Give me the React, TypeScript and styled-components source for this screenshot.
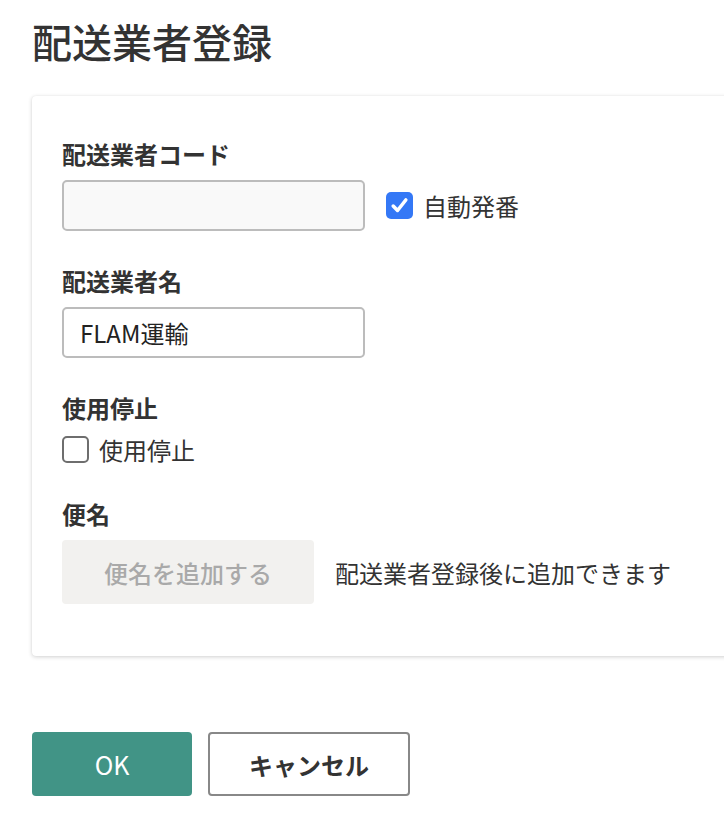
import React, { useState } from "react";
import styled, { createGlobalStyle } from "styled-components";

const GlobalStyle = createGlobalStyle`
  html, body {
    margin: 0;
    padding: 0;
    background: #ffffff;
    overflow-x: hidden;
  }
  body {
    font-family: "Noto Sans CJK JP", "Noto Sans", sans-serif;
    color: #333333;
  }
  * {
    box-sizing: border-box;
  }
`;

const CheckIcon = () => (
  <svg width="21" height="21" viewBox="0 0 16 16" fill="none">
    <path
      d="M3.2 8.4 L6.5 11.8 L12.8 3.8"
      stroke="#ffffff"
      strokeWidth="2.7"
      strokeLinecap="round"
      strokeLinejoin="round"
    />
  </svg>
);

const App: React.FC = () => {
  const [autoNumber, setAutoNumber] = useState(true);
  const [stopped, setStopped] = useState(false);
  const [name, setName] = useState("FLAM運輸");

  return (
    <>
      <GlobalStyle />
      <Page>
        <Title>配送業者登録</Title>

        <Card>
          {/* 配送業者コード */}
          <FieldGroup>
            <Label>配送業者コード</Label>
            <Row>
              <TextInput disabled={autoNumber} value="" readOnly />
              <CheckLabel onClick={() => setAutoNumber(!autoNumber)}>
                <CheckBox checked={autoNumber}>
                  {autoNumber && <CheckIcon />}
                </CheckBox>
                自動発番
              </CheckLabel>
            </Row>
          </FieldGroup>

          {/* 配送業者名 */}
          <FieldGroup>
            <Label>配送業者名</Label>
            <TextInput value={name} onChange={(e) => setName(e.target.value)} />
          </FieldGroup>

          {/* 使用停止 */}
          <FieldGroup>
            <Label>使用停止</Label>
            <CheckLabel onClick={() => setStopped(!stopped)}>
              <CheckBox checked={stopped}>
                {stopped && <CheckIcon />}
              </CheckBox>
              使用停止
            </CheckLabel>
          </FieldGroup>

          {/* 便名 */}
          <FieldGroup>
            <Label>便名</Label>
            <Row>
              <SubButton disabled>便名を追加する</SubButton>
              <Note>配送業者登録後に追加できます</Note>
            </Row>
          </FieldGroup>
        </Card>

        <Footer>
          <PrimaryButton>OK</PrimaryButton>
          <SecondaryButton>キャンセル</SecondaryButton>
        </Footer>
      </Page>
    </>
  );
};

export default App;

const Page = styled.div`
  padding: 0 0 40px 32px;
`;

const Title = styled.h1`
  margin: 11px 0 0;
  font-size: 40px;
  line-height: 60px;
  font-weight: 500;
  color: #333333;
`;

const Card = styled.div`
  margin-top: 25px;
  margin-right: -40px;
  padding: 41px 30px 52px;
  background: #ffffff;
  border-radius: 4px;
  box-shadow: 0 1px 4px rgba(0, 0, 0, 0.18), 0 0 1px rgba(0, 0, 0, 0.08);
  display: flex;
  flex-direction: column;
  gap: 33px;
`;

const FieldGroup = styled.div`
  display: flex;
  flex-direction: column;
  align-items: flex-start;
`;

const Label = styled.div`
  font-size: 24px;
  line-height: 34px;
  font-weight: 700;
  color: #333333;
  margin-bottom: 9px;
`;

const Row = styled.div`
  display: flex;
  flex-direction: row;
  align-items: center;
  gap: 21px;
`;

const TextInput = styled.input`
  width: 303px;
  height: 51px;
  padding: 0 16px;
  border: 2px solid #bcbcbc;
  border-radius: 5px;
  background: #ffffff;
  font-family: inherit;
  font-size: 24px;
  color: #222222;
  outline: none;

  &:disabled {
    background: #f9f9f9;
  }
`;

const CheckLabel = styled.label`
  display: flex;
  flex-direction: row;
  align-items: center;
  gap: 10px;
  height: 30px;
  font-size: 24px;
  color: #333333;
  cursor: pointer;
  user-select: none;
`;

const CheckBox = styled.span<{ checked: boolean }>`
  display: flex;
  align-items: center;
  justify-content: center;
  width: 27px;
  height: 27px;
  border-radius: 5px;
  background: ${(p) => (p.checked ? "#3478f6" : "#ffffff")};
  border: ${(p) => (p.checked ? "none" : "2px solid #6e6e6e")};
`;

const SubButton = styled.button`
  width: 252px;
  height: 64px;
  border: none;
  border-radius: 4px;
  background: #f2f1ef;
  font-family: inherit;
  font-size: 24px;
  font-weight: 500;
  color: #a9a9a9;
`;

const Note = styled.span`
  font-size: 24px;
  color: #333333;
`;

const Footer = styled.div`
  display: flex;
  flex-direction: row;
  gap: 16px;
  margin-top: 76px;
`;

const PrimaryButton = styled.button`
  width: 160px;
  height: 64px;
  border: none;
  border-radius: 4px;
  background: #419486;
  color: #ffffff;
  font-family: inherit;
  font-size: 25px;
  cursor: pointer;
`;

const SecondaryButton = styled.button`
  width: 202px;
  height: 64px;
  border: 2px solid #888888;
  border-radius: 4px;
  background: #ffffff;
  color: #333333;
  font-family: inherit;
  font-size: 24px;
  font-weight: 700;
  cursor: pointer;
`;
